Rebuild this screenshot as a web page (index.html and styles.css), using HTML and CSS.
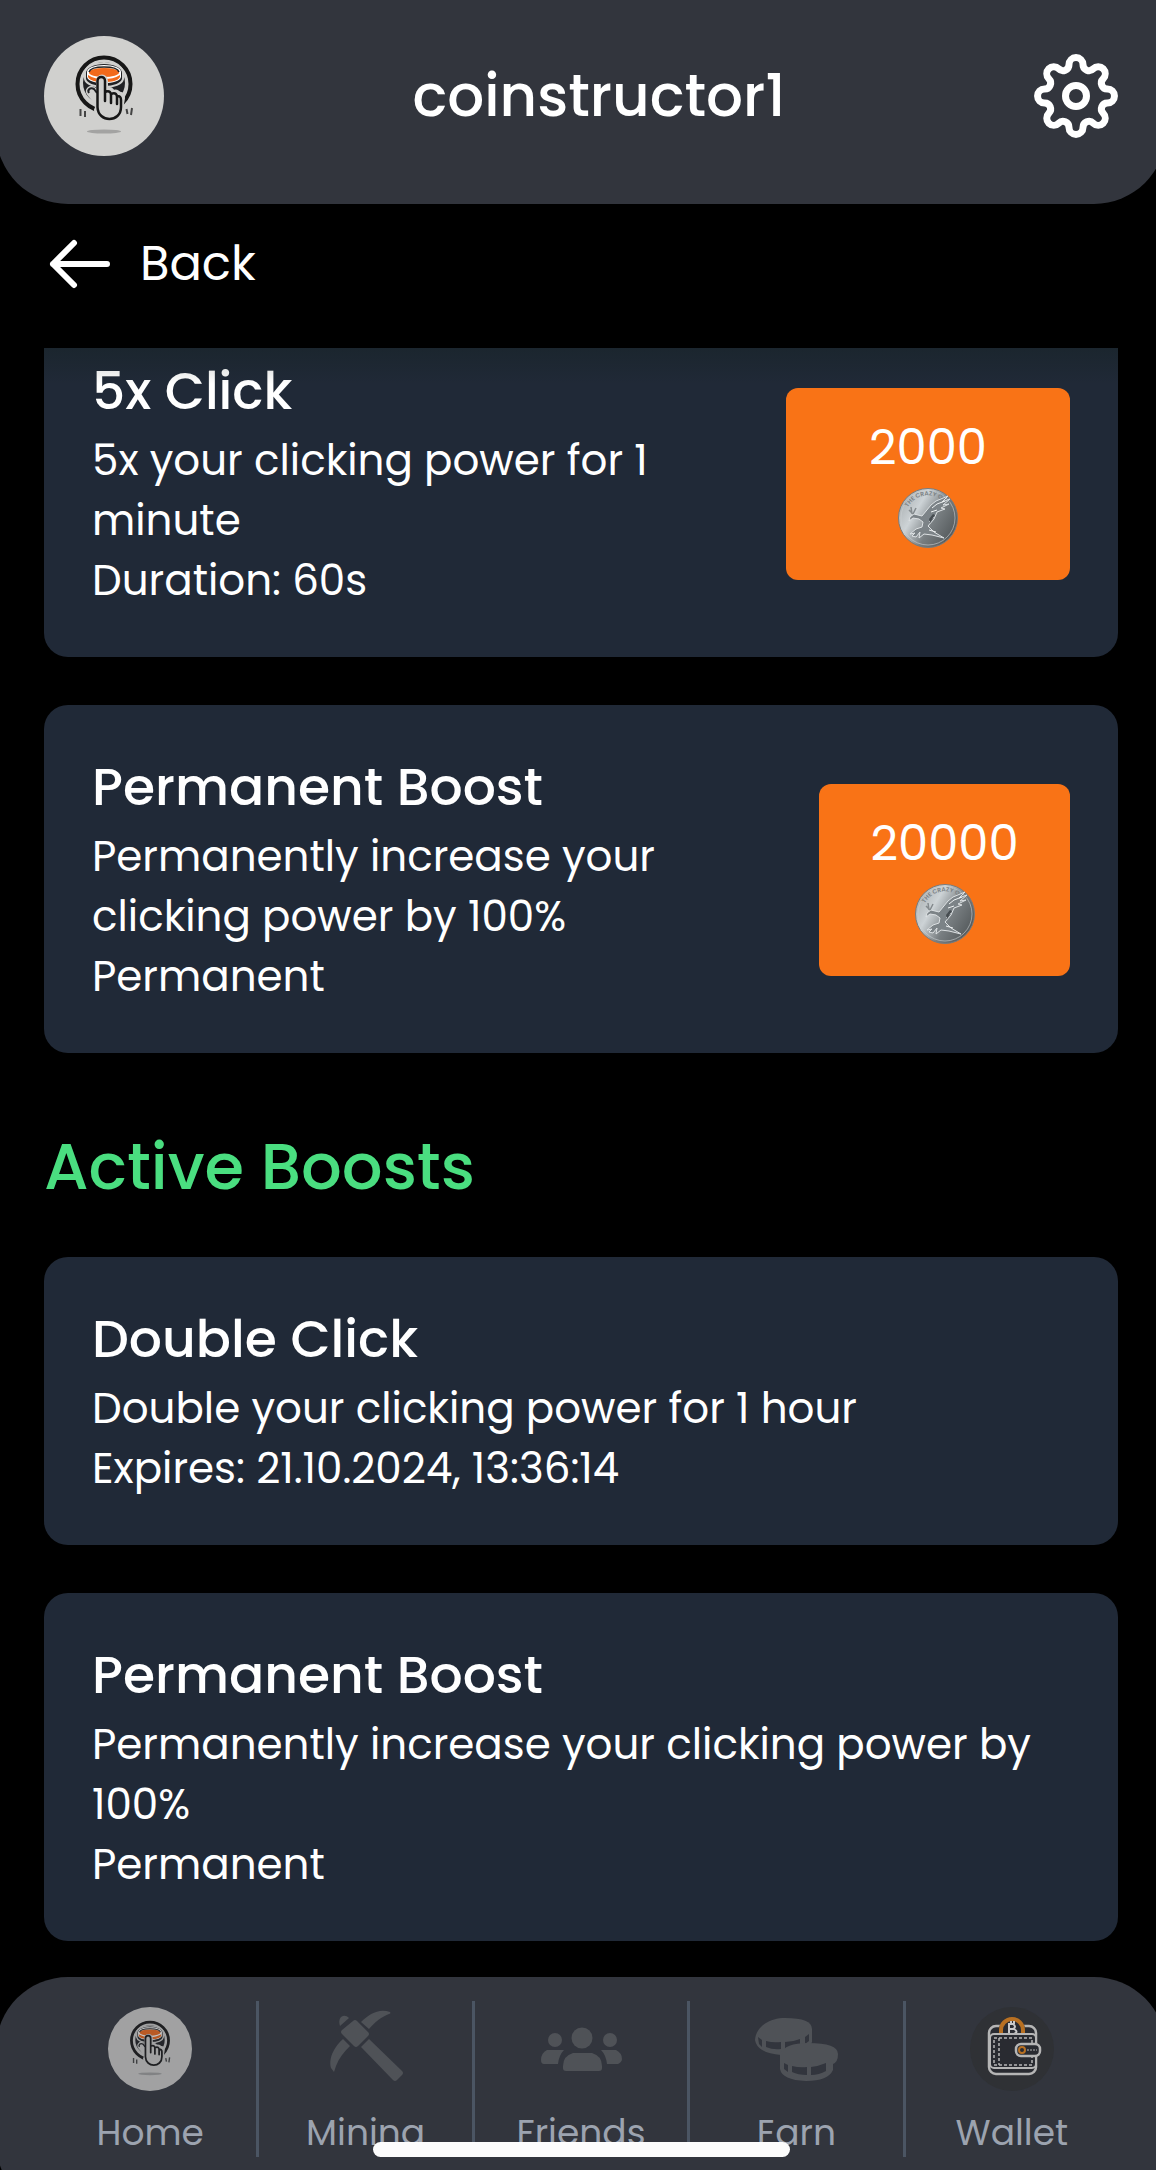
FILE: index.html
```html
<!DOCTYPE html>
<html lang="en">
<head>
<meta charset="utf-8">
<meta name="viewport" content="width=device-width, initial-scale=1">
<title>Boosts</title>
<link rel="stylesheet" href="styles.css">
</head>
<body>
<svg class="defs" aria-hidden="true">
  <defs>
    <linearGradient id="silver" x1="0" y1="0.2" x2="1" y2="0.8">
      <stop offset="0" stop-color="#a9aeb0"/>
      <stop offset="0.3" stop-color="#cdd3d6"/>
      <stop offset="0.6" stop-color="#787e81"/>
      <stop offset="1" stop-color="#4f5456"/>
    </linearGradient>
    <symbol id="logo" viewBox="0 0 120 120">
      <circle cx="60" cy="60" r="60" fill="#d0d0ce"/>
      <circle cx="60" cy="48" r="26.500" fill="none" stroke="#171717" stroke-width="4"/>
      <circle cx="60" cy="47" r="21" fill="#202124"/>
      <path d="M41 37c0-6 9-10 19-10s19 4 19 10v6c-1 5-9 8-19 8s-18-3-19-8z" fill="#202124" stroke="#d0d0ce" stroke-width="2"/>
      <path d="M43 36c0-4 7-7 17-7s17 3 17 7v5c-1 4-8 6-17 6s-16-2-17-6z" fill="#fff"/>
      <path d="M44 39c5 3 10 4 16 4s11-1 16-4v2c-2 4-8 5-16 5s-14-1-16-5z" fill="#f26a1b"/>
      <ellipse cx="60" cy="36.500" rx="15" ry="4.500" fill="#f26a1b"/>
      <path d="M45 36c1-4 8-5 15-5s14 1 15 5" fill="none" stroke="#222" stroke-width="1.500"/>
      <path d="M54 69L45 58c-3-4 1-8 5-5l4 4V45c0-6 8-6 8 0v9c4-2 6 0 7 2 3-1 5 0 6 2 3-1 4 1 4 4l-2 12c-2 13-22 15-25 0z" fill="#d0d0ce" stroke="#d0d0ce" stroke-width="4"/>
      <path d="M53 57l-3-4c-4-2-7 1-5 4" fill="none" stroke="#202124" stroke-width="2"/>
      <path d="M53.500 60V45c0-5.500 7.500-5.500 7.500 0v20M61 56c5-2 6 1 6 3v8M67 58c5-2 6 1 6 3v7M73 60c3 0 4 1 4 4v7c0 16-23 16-23.500 0V57" fill="none" stroke="#171717" stroke-width="2.500" stroke-linecap="round"/>
      <path d="M36.500 73v7M41 75v6M82.500 73l1 5M88 72l-1 7" stroke="#444" stroke-width="2"/>
      <ellipse cx="60" cy="95.500" rx="17" ry="2" fill="#a3a3a2"/>
    </symbol>
    <symbol id="coin" viewBox="0 0 60 60">
      <circle cx="30" cy="30" r="29.500" fill="url(#silver)" stroke="#777c7f"/>
      <circle cx="30" cy="30" r="27" fill="none" stroke="#c9ced0" stroke-opacity=".6"/>
      <path id="rim" d="M9 21A23 23 0 0 1 51 21" fill="none"/>
      <text class="coin-text"><textPath href="#rim" startOffset="2">THE CRAZY ONE</textPath></text>
      <path d="M24 28l9-11 5-4 12-5-6 6 8-3-7 6 6-1-8 4 4 1-8 3-3 7-6 7 6 6 10 6-12-3-8-1-5 4 1-6-4 5-4-1 3-3-5 1 6-5 6-2 1-5-4-3-6-1-4 3 1-4 4-3z" fill="#7c8387" stroke="#dde1e3" stroke-width="1"/>
      <path d="M34 20l5-4 8-3M33 24l6-2M36 29l-5 5M31 42l7 2" fill="none" stroke="#eef1f2" stroke-width="1"/>
      <path d="M31 31l4-5 2 1-5 8z" fill="#464c50"/>
      <path d="M14 26l-1-7M15 26l-4-4M15 26l3-6" stroke="#848a8d" stroke-width="1.500"/>
    </symbol>
  </defs>
</svg>

<header class="topbar">
  <svg class="avatar" role="img" aria-label="Profile picture"><use href="#logo"/></svg>
  <h1 class="username">coinstructor1</h1>
  <button class="settings" type="button" aria-label="Settings">
    <svg viewBox="0 0 84 84" fill="none" stroke="#fff" stroke-width="7">
      <path d="M73.450 35A7 7 0 0 1 73.450 49A6 6 0 0 0 69.190 59.290A7 7 0 0 1 59.290 69.190A6 6 0 0 0 49 73.450A7 7 0 0 1 35 73.450A6 6 0 0 0 24.710 69.190A7 7 0 0 1 14.810 59.290A6 6 0 0 0 10.550 49A7 7 0 0 1 10.550 35A6 6 0 0 0 14.810 24.710A7 7 0 0 1 24.710 14.810A6 6 0 0 0 35 10.550A7 7 0 0 1 49 10.550A6 6 0 0 0 59.290 14.810A7 7 0 0 1 69.190 24.710A6 6 0 0 0 73.450 35Z"/>
      <circle cx="42" cy="42" r="10.500"/>
    </svg>
  </button>
</header>

<div class="backbar">
  <a class="back" href="#">
    <svg viewBox="0 0 72 72" fill="none" stroke="#fff" stroke-width="6" stroke-linecap="round" stroke-linejoin="round" aria-hidden="true"><path d="M63 36H9M30 15L9 36L30 57"/></svg>
    <span>Back</span>
  </a>
</div>

<main class="content">
  <section class="list list-scrolled">
    <article class="card">
      <div class="card-text">
        <h3>5x Click</h3>
        <p>5x your clicking power for 1 minute</p>
        <p>Duration: 60s</p>
      </div>
      <button class="price price-wide" type="button">
        <span>2000</span>
        <svg aria-hidden="true"><use href="#coin"/></svg>
      </button>
    </article>
    <article class="card">
      <div class="card-text">
        <h3>Permanent Boost</h3>
        <p>Permanently increase your clicking power by 100%</p>
        <p>Permanent</p>
      </div>
      <button class="price" type="button">
        <span>20000</span>
        <svg aria-hidden="true"><use href="#coin"/></svg>
      </button>
    </article>
  </section>

  <h2 class="section-title">Active Boosts</h2>

  <section class="list">
    <article class="card">
      <div class="card-text">
        <h3>Double Click</h3>
        <p>Double your clicking power for 1 hour</p>
        <p>Expires: 21.10.2024, 13:36:14</p>
      </div>
    </article>
    <article class="card">
      <div class="card-text">
        <h3>Permanent Boost</h3>
        <p>Permanently increase your clicking power by 100%</p>
        <p>Permanent</p>
      </div>
    </article>
  </section>
</main>

<nav class="tabs">
  <a class="tab" href="#">
    <svg class="dimmed" viewBox="0 0 120 120" aria-hidden="true"><use href="#logo"/></svg>
    <span>Home</span>
  </a>
  <a class="tab" href="#">
    <svg viewBox="0 0 84 84" fill="#4f5257" aria-hidden="true">
      <path d="M37 40l8-8 33 32q2 2 0 4l-5 5q-2 2-4 0z"/>
      <path d="M29 14q2-2 4 0l11 11q2 2 0 4L34 39q-2 2-4 0L18 27q-2-2 0-4z"/>
      <path d="M16 19c-3-9 4-13 9-8z"/>
      <path d="M37 15C45 7 55 1 66 5c1 1 0 2-1 2-8 3-14 8-20 15z"/>
      <path d="M19 32C12 38 4 50 7 61l3 4 2-6c3-8 8-14 14-20z"/>
    </svg>
    <span>Mining</span>
  </a>
  <a class="tab" href="#">
    <svg viewBox="0 0 84 84" fill="#4f5257" aria-hidden="true">
      <circle cx="43" cy="31" r="10.500"/>
      <circle cx="16" cy="33" r="7"/>
      <circle cx="71" cy="33" r="7"/>
      <path d="M8 43h17q-5 5-6 14H5q-3 0-3-4 0-7 6-10z"/>
      <path d="M62 43h15q6 3 6 9 0 3-4 5H68q-1-9-6-14z"/>
      <path d="M34 46h19q10 3 10 13v2q0 3-3 3H27q-3 0-3-3v-2q0-10 10-13z"/>
    </svg>
    <span>Friends</span>
  </a>
  <a class="tab" href="#">
    <svg viewBox="0 0 84 84" aria-hidden="true">
      <path d="M1 33C2 19 16 11 31 11q27 0 27 11v13q-5 13-31 13Q3 46 1 33z" fill="#4f5257"/>
      <path d="M4 30l4 3v7l-3-3zM12 34q7 2 15 1v7q-8 1-15-2zM31 35q8 0 15-3v7q-7 3-15 3zM51 30l4-3v7l-4 3z" fill="#32353d"/>
      <path d="M26 47q5-11 28-11 30 0 30 11 0 8-5 10v6q-5 11-27 11-24-1-26-12z" fill="#4f5257"/>
      <path d="M30 56l4 2v7l-4-3zM38 59q8 2 15 1v8q-9 0-15-3zM57 60q8-1 15-4v8q-7 4-15 4z" fill="#32353d"/>
    </svg>
    <span>Earn</span>
  </a>
  <a class="tab" href="#">
    <svg viewBox="0 0 84 84" aria-hidden="true" fill="none">
      <circle cx="42" cy="42" r="42" fill="#2f3135"/>
      <rect x="19" y="19" width="47" height="48" rx="7" fill="#292b31" stroke="#b5b5b5" stroke-width="2.500"/>
      <path d="M29 27v-4a13 13 0 0 1 26 0v4z" fill="#292b31"/>
      <path d="M31 27v-4a11 11 0 0 1 22 0v4" stroke="#b87022" stroke-width="4"/>
      <path d="M39 16v12M39 17h4q4 3 0 5h-4M39 22h5q5 3 0 5h-5M41 14v3M44 14v3" stroke="#c9c9c9" stroke-width="2"/>
      <rect x="20" y="27" width="46" height="34" rx="4" fill="#292b31" stroke="#b5b5b5" stroke-width="2"/>
      <path d="M24 31h38v27H24zM29 31v27" stroke="#b5b5b5" stroke-width="1.500" stroke-dasharray="3 2"/>
      <rect x="46" y="37" width="24" height="12" rx="5" fill="#292b31" stroke="#b5b5b5" stroke-width="2.500"/>
      <circle cx="52" cy="43" r="3" stroke="#b87022" stroke-width="2"/>
      <path d="M57 43h10" stroke="#b5b5b5" stroke-dasharray="2 1"/>
    </svg>
    <span>Wallet</span>
  </a>
</nav>
<div class="home-indicator"></div>
</body>
</html>
```
FILE: styles.css
```css
* {
  box-sizing: border-box;
  margin: 0;
  padding: 0;
}

body {
  background: #000;
  color: #fff;
  font-family: Poppins, Inter, "Liberation Sans", sans-serif;
  font-size: 42px;
  line-height: 60px;
  overflow-x: hidden;
}

button {
  border: 0;
  color: inherit;
  font: inherit;
  cursor: pointer;
}

a {
  color: inherit;
  text-decoration: none;
}

svg {
  display: block;
}

.defs {
  position: absolute;
  width: 0;
  height: 0;
}

.topbar {
  display: flex;
  align-items: center;
  justify-content: space-between;
  margin: 0 -10px 0 -4px;
  padding: 36px 48px 48px;
  border-radius: 0 0 72px 72px;
  background: #32353d;
}

.avatar {
  width: 120px;
  height: 120px;
}

.username {
  font-size: 58px;
  font-weight: 500;
  line-height: 72px;
}

.settings {
  background: none;
}

.settings svg {
  width: 84px;
  height: 84px;
}

.backbar {
  position: relative;
  z-index: 1;
  padding: 24px 44px 48px;
  background: #000;
}

.backbar::after {
  content: "";
  position: absolute;
  top: 100%;
  left: 44px;
  right: 38px;
  height: 36px;
  background: linear-gradient(rgba(12, 28, 20, 0.25), transparent);
}

.back {
  display: flex;
  align-items: center;
  gap: 24px;
  width: fit-content;
  font-size: 48px;
  line-height: 72px;
}

.back svg {
  width: 72px;
  height: 72px;
}

.content {
  padding: 0 38px 220px 44px;
  overflow: hidden;
}

.list {
  display: flex;
  flex-direction: column;
  gap: 48px;
}

.list-scrolled {
  margin-top: -39px;
}

.card {
  display: flex;
  align-items: center;
  justify-content: space-between;
  gap: 48px;
  padding: 48px 48px 46px;
  border-radius: 24px;
  background: #202937;
}

.card h3 {
  margin-bottom: 6px;
  font-size: 52px;
  font-weight: 500;
  line-height: 68px;
}

.price {
  display: flex;
  flex: none;
  flex-direction: column;
  align-items: center;
  gap: 4px;
  width: 251px;
  padding: 24px 24px 32px;
  border-radius: 12px;
  background: #f97316;
  font-size: 48px;
  line-height: 72px;
}

.price-wide {
  width: 284px;
}

.price svg {
  width: 60px;
  height: 60px;
}

.coin-text {
  fill: #7b8184;
  font-size: 6px;
  font-weight: 600;
}

.section-title {
  margin: 72px 0 48px;
  color: #4ade80;
  font-size: 64px;
  font-weight: 500;
  line-height: 84px;
}

.tabs {
  position: fixed;
  left: -4px;
  right: -10px;
  bottom: -44px;
  display: flex;
  padding: 24px 48px 57px;
  border-radius: 72px;
  background: #32353d;
  color: #9ca3af;
  font-size: 36px;
  line-height: 48px;
}

.tab {
  display: flex;
  flex: 1 1 0;
  flex-direction: column;
  align-items: center;
  gap: 18px;
  padding-top: 6px;
}

.tab:not(:last-child) {
  border-right: 3px solid #4b5563;
}

.tab svg {
  width: 84px;
  height: 84px;
}

.tab .dimmed {
  opacity: 0.7;
}

.home-indicator {
  position: fixed;
  bottom: 13px;
  left: 50%;
  width: 417px;
  height: 15px;
  margin-left: -205px;
  border-radius: 8px;
  background: #fcfcfc;
}
```
